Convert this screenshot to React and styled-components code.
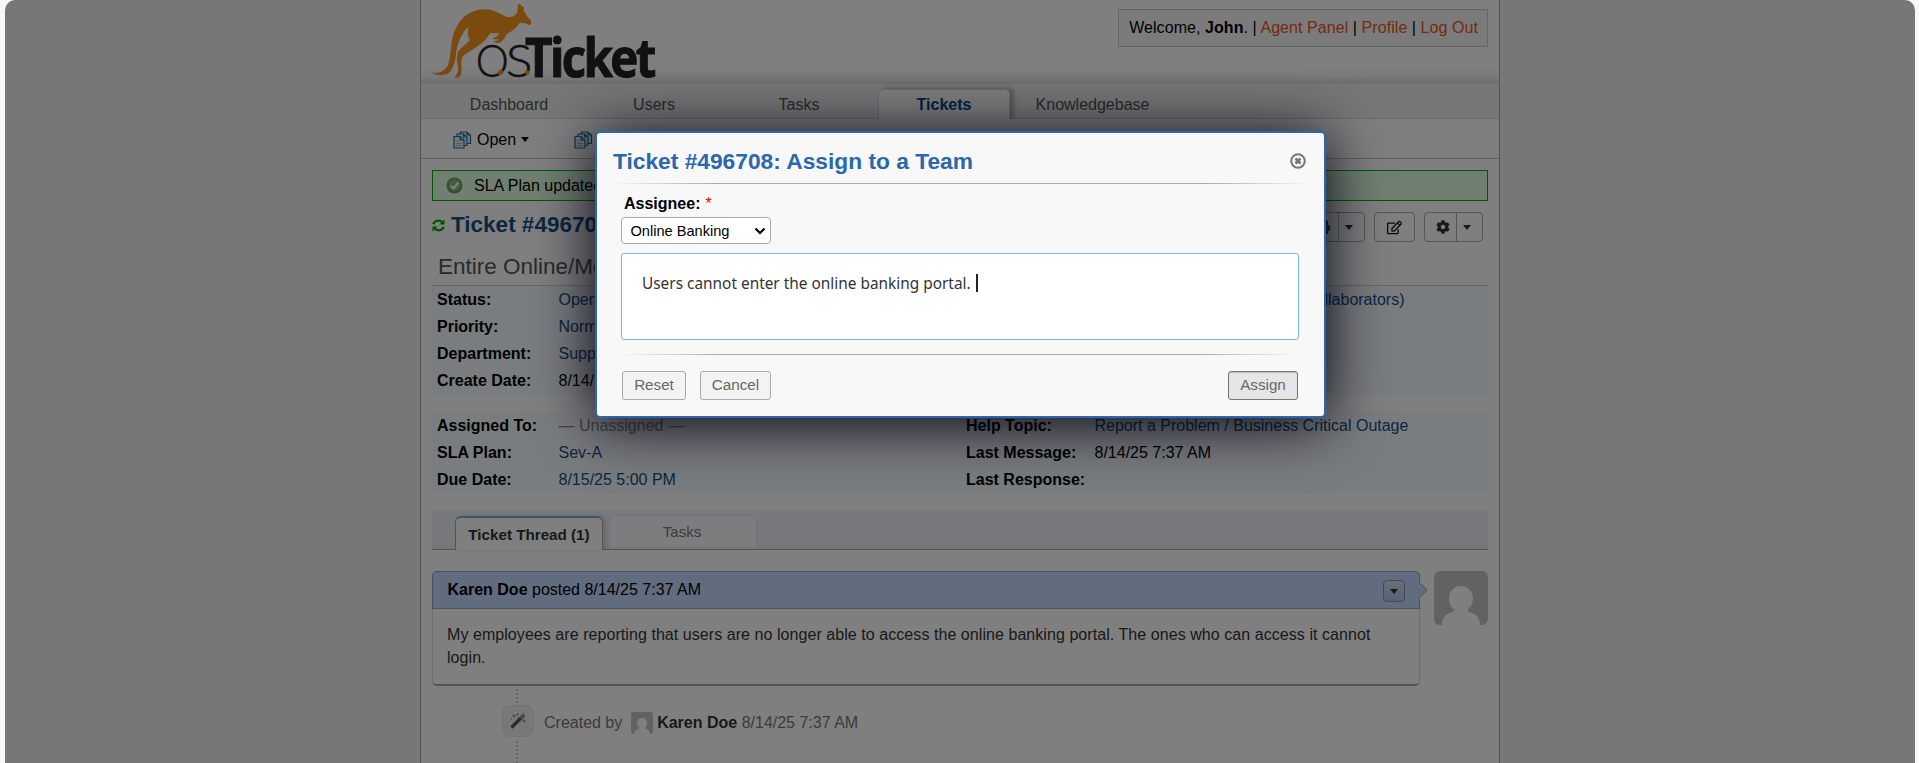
import React from "react";
import styled, { createGlobalStyle, css } from "styled-components";
import { FaPrint, FaRegEdit, FaCog } from "react-icons/fa";

const Global = createGlobalStyle`
  * { box-sizing: border-box; }
  html, body { margin: 0; padding: 0; background: #f8f8f8; }
  body { font: 16px/20px "Liberation Sans", Arial, sans-serif; color: #000; overflow: hidden; }
`;

const Frame = styled.div`
  position: relative;
  width: 1910px;
  height: 763px;
  margin-left: 5px;
  overflow: hidden;
  border-radius: 10px 10px 0 0;
  background: #eee;
`;

const Page = styled.div`
  width: 1080px;
  height: 763px;
  margin-left: 415px;
  background: #fff;
  border: solid #aaa;
  border-width: 0 1px;
`;

const Header = styled.header`
  display: flex;
  justify-content: space-between;
  height: 84px;
  padding: 0 11px 0 10px;
  background: linear-gradient(#fff 0 68px, #f4f4f4 76px, #dcdcdc 84px);
`;

const LogoArt = styled.svg`
  overflow: visible;
`;

const Welcome = styled.div`
  height: 38px;
  margin-top: 9px;
  padding: 8px 9px 0 10px;
  background: #f7f7f7;
  border: 1px solid #ccc;
  letter-spacing: 0.065px;
  white-space: pre;
`;

const Orange = styled.a`
  color: #e65524;
`;

const Nav = styled.nav`
  display: flex;
  align-items: flex-end;
  gap: 13px;
  height: 35px;
  padding-left: 22px;
  background: #eee;
  border-bottom: 1px solid #c5d9f1;
`;

const NavTab = styled.a`
  width: 132px;
  height: 29px;
  padding-left: ${(p) => p.$shift || 0}px;
  line-height: 31px;
  text-align: center;
  color: #555;
  ${(p) =>
    p.$active &&
    css`
      height: 30px;
      margin-bottom: -1px;
      line-height: 30px;
      color: #004a80;
      font-weight: bold;
      background: #fff;
      border: 1px solid #c5d9f1;
      border-bottom: 0;
      border-radius: 5px 5px 0 0;
      box-shadow: 4px -1px 4px rgba(0, 0, 0, 0.25);
      clip-path: inset(-8px -8px 0 -8px);
    `}
`;

const SubNav = styled.nav`
  display: flex;
  align-items: center;
  height: 40px;
  padding: 2px 0 0 32px;
  border-bottom: 1px solid #bebebe;
`;

const SubItem = styled.a`
  display: flex;
  align-items: center;
  width: 121px;
  gap: 5px;
  white-space: nowrap;
`;

const Content = styled.main`
  padding: 11px 11px 0;
`;

const Notice = styled.div`
  display: flex;
  align-items: center;
  gap: 11px;
  height: 31px;
  padding-left: 13px;
  background: #e0ffe0;
  border: 1px solid #0a0;
`;

const Caret = styled.span`
  width: 0;
  height: 0;
  border: solid transparent;
  border-width: 5px 4.5px 0;
  border-top-color: ${(p) => p.$color || "#000"};
`;

const TitleRow = styled.div`
  display: flex;
  justify-content: space-between;
  height: 51px;
  padding: 11px 5px 0 0;
`;

const Title = styled.h2`
  display: flex;
  align-items: center;
  gap: 6px;
  height: 26px;
  margin: 0;
  font-size: 22.5px;
  color: #184e81;
`;

const Tools = styled.div`
  display: flex;
  gap: 9px;
`;

const ToolButton = styled.span`
  display: flex;
  width: ${(p) => p.$w}px;
  height: 30px;
  border: 1px solid #aaa;
  border-radius: 4px;
  color: #333;
`;

const ToolCell = styled.span`
  display: flex;
  flex: 1;
  align-items: center;
  justify-content: center;
  padding-left: ${(p) => p.$shift || 0}px;
`;

const DropCell = styled.span`
  display: flex;
  flex: 0 0 26px;
  align-items: center;
  padding: 1px 0 0 6px;
  border-left: 1px solid #aaa;
`;

const Subject = styled.h3`
  height: 34px;
  margin: 0;
  padding: 0 6px;
  font-weight: normal;
  font-size: 22.5px;
  line-height: 29px;
  color: #555;
  border-bottom: 1px solid #ccc;
`;

const Info = styled.div`
  display: grid;
  grid-template-columns: 121.5px 407.5px 128.5px 1fr;
  grid-auto-rows: 27px;
  line-height: 27px;
  padding-left: 5px;
  margin-bottom: 18px;
  background: #f4faff;
  white-space: nowrap;
`;

const Value = styled.span`
  padding-left: ${(p) => p.$indent || 0}px;
  color: ${(p) => (p.$plain ? "#000" : p.$muted ? "#888" : "#184e81")};
`;

const Tabs = styled.div`
  display: flex;
  height: 39px;
  gap: 6px;
  padding-left: 23px;
  background: linear-gradient(#eef3f8 0 30px, #e6eaf0);
  border-bottom: 1px solid #aaa;
`;

const Tab = styled.a`
  width: 148px;
  height: 32px;
  margin-top: 4px;
  padding-right: 2px;
  line-height: 32px;
  text-align: center;
  font-size: 15px;
  color: #777;
  background: #f9fbfd;
  border: 1px solid #e3e8ee;
  border-bottom: 0;
  border-radius: 6px 6px 0 0;
  ${(p) =>
    p.$active &&
    css`
      height: 34px;
      margin-top: 5px;
      padding-right: 0;
      line-height: 34px;
      font-weight: bold;
      font-size: 15.2px;
      color: #333;
      background: #fff;
      border-color: #aaa;
      border-top: 2px solid #81a9d7;
      box-shadow: 3px 0 4px rgba(0, 0, 0, 0.12);
    `}
`;

const Thread = styled.section`
  display: flex;
  justify-content: space-between;
  padding-top: 21px;
`;

const Entry = styled.article`
  position: relative;
  width: 988px;
  height: 115px;
  border: 1px solid #ddd;
  border-bottom: 2px solid #aaa;
  border-radius: 5px;
`;

const EntryHead = styled.div`
  display: flex;
  align-items: center;
  justify-content: space-between;
  height: 38px;
  margin: -1px -1px 0;
  padding: 0 14px 0 14.5px;
  background: #c3d9ff;
  border: 1px solid #8ba7cf;
  border-radius: 5px 5px 0 0;
`;

const Pointer = styled.svg`
  position: absolute;
  left: 986px;
  top: 10px;
`;

const EntryMenu = styled.span`
  display: flex;
  align-items: center;
  justify-content: center;
  width: 22px;
  height: 22px;
  margin-top: 2px;
  border: 1px solid #8497b5;
  border-radius: 4px;
  background: linear-gradient(#cfdef6, #b2c4e2);
`;

const EntryBody = styled.p`
  margin: 0;
  padding: 14px 14px 0;
  line-height: 23px;
  letter-spacing: 0.06px;
  color: #333;
`;

const Events = styled.section`
  padding: 3px 0 0 70px;
`;

const Dots = styled.div`
  width: 2px;
  height: ${(p) => p.$h}px;
  margin-left: 14px;
  background: repeating-linear-gradient(#ccc 0 2px, transparent 2px 4px);
`;

const Event = styled.div`
  display: flex;
  align-items: center;
  height: 32px;
  margin: 2px 0 4px;
  color: #777;
  white-space: pre;
`;

const EventBadge = styled.span`
  display: flex;
  align-items: center;
  justify-content: center;
  width: 32px;
  height: 32px;
  margin-right: 10px;
  background: #f0f0f0;
  border: 1px solid #e8e8e8;
  border-radius: 8px;
`;

const EventText = styled.span`
  display: flex;
  align-items: center;
  padding-top: 3px;
`;

const Strong = styled.b`
  margin-left: 4px;
  color: #333;
`;

const Overlay = styled.div`
  position: absolute;
  inset: 0;
  background: rgba(0, 0, 0, 0.5);
`;

const Dialog = styled.section`
  position: absolute;
  left: 590px;
  top: 131px;
  width: 731px;
  height: 287px;
  padding: 0 15px;
  background: #f8f8f8;
  border: 2px solid #2a67ac;
  border-radius: 5px;
  box-shadow: 0 5px 60px #001;
`;

const DialogHead = styled.div`
  display: flex;
  align-items: center;
  justify-content: space-between;
  height: 50px;
  padding: 6px 3px 0 1px;
`;

const DialogTitle = styled.h3`
  margin: 0;
  font-size: 22.75px;
  color: #2a67ac;
`;

const Rule = styled.div`
  height: 1px;
  background: linear-gradient(90deg, transparent, #aaa 15%, #aaa 85%, transparent);
`;

const Form = styled.div`
  padding: 10px 10px 0 9px;
`;

const Label = styled.label`
  display: block;
  height: 23px;
  padding-left: 3px;
  font-weight: bold;
`;

const Star = styled.span`
  margin-left: 5px;
  font-weight: normal;
  font-size: 16px;
  color: red;
`;

const Select = styled.div`
  display: flex;
  align-items: center;
  justify-content: space-between;
  width: 150px;
  height: 27px;
  padding: 0 4px 0 8.5px;
  font-size: 14.6px;
  background: #fff;
  border: 1px solid #aaa;
  border-radius: 4px;
`;

const Editor = styled.div`
  display: flex;
  align-items: flex-start;
  height: 87px;
  margin: 9px 0 14px;
  padding: 20px 20px;
  background: #fff;
  border: 1px solid #82b5e6;
  border-radius: 3px;
  font: 15.4px/20px "Noto Sans", sans-serif;
  color: #333;
`;

const Cursor = styled.span`
  width: 2px;
  height: 18px;
  margin: 0 0 0 5px;
  background: #222;
`;

const Actions = styled.div`
  display: flex;
  gap: 14px;
  padding: 16px 1px 0;
`;

const Button = styled.button`
  width: ${(p) => p.$w}px;
  height: 29px;
  padding: 0 0 2px;
  font: 15.2px "Liberation Sans", Arial, sans-serif;
  color: #666;
  background: #f3f3f3;
  border: 1px solid #aaa;
  border-radius: 3px;
  ${(p) =>
    p.$primary &&
    css`
      margin-left: auto;
      background: #e6e6e6;
      border-color: #777;
      box-shadow: inset 0 1px 1px #bbb;
    `}
`;

const Logo = () => (
  <LogoArt width="224" height="80" viewBox="63 0 672 240">
    <path
      fill="#f7941d"
      d="M63 216 C85 224 106 214 115 193 C124 168 120 118 137 86 C155 47 188 29 222 28 C249 26 268 42 291 51 C306 53 317 45 321 38 C326 28 319 17 327 12 C332 10 333 14 334 22 C339 12 344 24 340 32 C348 36 348 48 356 55 C364 62 367 67 359 76 C345 69 338 68 328 70 C319 84 306 95 289 103 C287 113 282 119 272 127 C264 131 254 129 249 124 C258 124 263 122 268 117 C259 119 252 119 246 115 C256 113 265 108 268 99 C260 101 250 99 240 99 C230 118 218 129 203 138 C187 153 162 160 156 174 C151 190 158 207 153 225 C149 232 143 234 135 234 C136 225 146 220 145 207 C141 190 139 174 144 155 C154 142 174 128 180 120 C173 110 172 96 175 80 C156 97 142 131 139 155 C137 177 132 203 119 217 C101 232 75 226 63 216Z"
    />
    <g fontFamily="Lato, sans-serif" fill="#222" fontWeight="300">
      <text x="197" y="231" fontSize="133" textLength="99" lengthAdjust="spacingAndGlyphs" stroke="#222" strokeWidth="1.5">O</text>
      <text x="287" y="231" fontSize="133" textLength="80" lengthAdjust="spacingAndGlyphs" stroke="#222" strokeWidth="1.5">S</text>
    </g>
    <text transform="translate(345 230) scale(.88 1)" fontFamily="Open Sans, sans-serif" fontWeight="700" fontSize="162" letterSpacing="-9" fill="#222" stroke="#222" strokeWidth="3">Ticket</text>
    <path d="M260 218 l11 -11 10 7 -11 13z M343 219 l8 -10 9 7 -6 11z" fill="#f7941d" />
  </LogoArt>
);

const Copies = () => (
  <svg width="19" height="18" viewBox="0 0 19 18" fill="#e8f1f5" stroke="#1d6f96" strokeWidth="1.2">
    <path d="M7.5 1h6l4 3v8.500h-10z" />
    <path d="M4 3h6.500l3.500 3v8.500H4z" />
    <path d="M1 5.500h6l4 3.500v8H1z" />
    <path d="M7 5.500v3.500h4M10.500 3v3h3M14 1v3h3" fill="none" />
    <path d="M3 10h3M3 12.500h6M3 14.500h6" stroke="#9bb" strokeWidth="1" />
  </svg>
);

const Check = () => (
  <svg width="17" height="17" viewBox="0 0 17 17">
    <circle cx="8.500" cy="8.500" r="8" fill="#5aa45a" />
    <circle cx="8.500" cy="8" r="6" fill="#7fbf7a" />
    <path d="M4.800 8.700l2.700 2.700 4.800-5.600" fill="none" stroke="#fff" strokeWidth="2.200" />
  </svg>
);

const Refresh = () => (
  <svg width="13" height="13" viewBox="0 0 13 13" fill="none" stroke="#0a0" strokeWidth="2.200">
    <path d="M1.300 5.200C2.500 1.500 7.500.4 10.300 3.400M11.700 7.800C10.500 11.500 5.500 12.600 2.700 9.600" />
    <path d="M12.500.3v5.200H7.300zM.5 12.700V7.500h5.200z" fill="#0a0" stroke="none" />
  </svg>
);

const Wand = () => (
  <svg width="16" height="16" viewBox="0 0 16 16">
    <path d="M1.500 14.500L14 2" stroke="#555" strokeWidth="3.200" />
    <path d="M10.800 5.200L13.300 2.700" stroke="#eee" strokeWidth="1.200" />
    <path d="M4 1.500v3M2.500 3h3M7.500.5v2M6.500 1.500h2M14 6.500v3M12.500 8h3M1.500 5.500v1.200M8 4.500v1.200" stroke="#777" strokeWidth=".9" />
  </svg>
);

const Close = () => (
  <svg width="16" height="16" viewBox="0 0 16 16" fill="none" stroke="#777">
    <circle cx="8" cy="8" r="6.800" strokeWidth="2" />
    <path d="M5.500 5.500l5 5M10.500 5.500l-5 5" strokeWidth="2.700" />
  </svg>
);

const Avatar = ({ size }) => (
  <svg width={size} height={size} viewBox="0 0 54 54">
    <rect width="54" height="54" rx="6" fill="#c4c4c4" />
    <path
      fill="#fff"
      d="M27 15c7 0 12 5.500 12 12.500 0 5-2.500 9.500-6 11.500 1 2 3 2.500 5 3 5 1 8 6 8 12H8c0-6 3-11 8-12 2-.5 4-1 5-3-3.500-2-6-6.500-6-11.500C15 20.500 20 15 27 15z"
    />
  </svg>
);

export default function App() {
  return (
    <>
      <Global />
      <Frame>
        <Page>
          <Header>
            <Logo />
            <Welcome>
              Welcome, <b>John</b>. | <Orange>Agent Panel</Orange> | <Orange>Profile</Orange> | <Orange>Log Out</Orange>
            </Welcome>
          </Header>
          <Nav>
            <NavTab>Dashboard</NavTab>
            <NavTab>Users</NavTab>
            <NavTab>Tasks</NavTab>
            <NavTab $active>Tickets</NavTab>
            <NavTab $shift={7}>Knowledgebase</NavTab>
          </Nav>
          <SubNav>
            <SubItem><Copies />Open<Caret /></SubItem>
            <SubItem><Copies />My Tickets</SubItem>
          </SubNav>
          <Content>
            <Notice><Check />SLA Plan updated</Notice>
            <TitleRow>
              <Title><Refresh />Ticket #496708</Title>
              <Tools>
                <ToolButton $w={59}>
                  <ToolCell><FaPrint size={14} /></ToolCell>
                  <DropCell><Caret $color="#333" /></DropCell>
                </ToolButton>
                <ToolButton $w={41}><ToolCell><FaRegEdit size={15} color="#111" /></ToolCell></ToolButton>
                <ToolButton $w={59}>
                  <ToolCell $shift={5}><FaCog size={14} /></ToolCell>
                  <DropCell><Caret $color="#333" /></DropCell>
                </ToolButton>
              </Tools>
            </TitleRow>
            <Subject>Entire Online/Mobile</Subject>
            <Info>
              <b>Status:</b><Value>Open</Value><b>User:</b><Value $indent={61}>Karen Doe (Manage Collaborators)</Value>
              <b>Priority:</b><Value>Normal</Value><b>Email:</b><span />
              <b>Department:</b><Value>Support</Value><b>Source:</b><span />
              <b>Create Date:</b><Value $plain>8/14/25 7:37 AM</Value><span /><span />
            </Info>
            <Info>
              <b>Assigned To:</b><Value $muted>— Unassigned —</Value><b>Help Topic:</b><Value>Report a Problem / Business Critical Outage</Value>
              <b>SLA Plan:</b><Value>Sev-A</Value><b>Last Message:</b><Value $plain>8/14/25 7:37 AM</Value>
              <b>Due Date:</b><Value>8/15/25 5:00 PM</Value><b>Last Response:</b><span />
            </Info>
            <Tabs>
              <Tab $active>Ticket Thread (1)</Tab>
              <Tab>Tasks</Tab>
            </Tabs>
            <Thread>
              <Entry>
                <EntryHead>
                  <span><b>Karen Doe</b> posted 8/14/25 7:37 AM</span>
                  <EntryMenu><Caret $color="#333" /></EntryMenu>
                </EntryHead>
                <Pointer width="9" height="16"><path d="M0 0l8 8-8 8z" fill="#c3d9ff" /><path d="M0 0l8 8-8 8" fill="none" stroke="#8ba7cf" /></Pointer>
                <EntryBody>
                  My employees are reporting that users are no longer able to access the online banking portal. The ones who can access it cannot login.
                </EntryBody>
              </Entry>
              <Avatar size={54} />
            </Thread>
            <Events>
              <Dots $h={14} />
              <Event>
                <EventBadge><Wand /></EventBadge>
                <EventText>
                  {"Created by  "}<Avatar size={22} /><Strong>Karen Doe</Strong>{" 8/14/25 7:37 AM"}
                </EventText>
              </Event>
              <Dots $h={22} />
            </Events>
          </Content>
        </Page>
        <Overlay />
        <Dialog>
          <DialogHead>
            <DialogTitle>Ticket #496708: Assign to a Team</DialogTitle>
            <Close />
          </DialogHead>
          <Rule />
          <Form>
            <Label>Assignee:<Star>*</Star></Label>
            <Select>
              Online Banking
              <svg width="12" height="8" viewBox="0 0 12 8"><path d="M1.500 1.500L6 6l4.500-4.500" fill="none" stroke="#000" strokeWidth="2.200" /></svg>
            </Select>
            <Editor>Users cannot enter the online banking portal.<Cursor /></Editor>
            <Rule />
            <Actions>
              <Button $w={64}>Reset</Button>
              <Button $w={71}>Cancel</Button>
              <Button $w={70} $primary>Assign</Button>
            </Actions>
          </Form>
        </Dialog>
      </Frame>
    </>
  );
}
